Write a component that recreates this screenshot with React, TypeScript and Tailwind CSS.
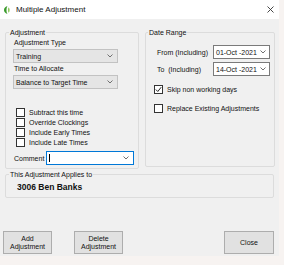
import React from 'react';

const font = { fontFamily: '"Liberation Sans", Arial, sans-serif' };

function Chevron() {
  return (
    <svg width="6" height="4" viewBox="0 0 6 4" className="shrink-0">
      <path d="M0.5 0.5 L3 3 L5.5 0.5" fill="none" stroke="#707070" strokeWidth="1" />
    </svg>
  );
}

function GraySelect({ value }: { value: string }) {
  return (
    <div className="flex items-center justify-between w-[105px] h-[14px] bg-[#e5e5e5] border border-[#c2c2c2] pl-[2px] pr-[4px] text-[7px] leading-none text-[#111] whitespace-nowrap">
      <span>{value}</span>
      <Chevron />
    </div>
  );
}

function DateSelect({ value }: { value: string }) {
  return (
    <div className="flex items-center justify-between w-[57px] h-[14px] bg-white border border-[#7a7a7a] pl-[2px] pr-[3px] text-[7px] leading-none text-[#111] whitespace-nowrap">
      <span>{value}</span>
      <Chevron />
    </div>
  );
}

function Check({ label, checked }: { label: string; checked?: boolean }) {
  return (
    <div className="flex items-center h-[9px] gap-[4px] whitespace-nowrap">
      <div className="w-[9px] h-[9px] border border-[#333] bg-white flex items-center justify-center shrink-0">
        {checked && (
          <svg width="7" height="7" viewBox="0 0 7 7">
            <path d="M0.8 3.5 L2.8 5.5 L6.2 1.2" fill="none" stroke="#222" strokeWidth="1" />
          </svg>
        )}
      </div>
      <span className="text-[7px] leading-none text-[#111]">{label}</span>
    </div>
  );
}

function Btn({ children, wide }: { children: React.ReactNode; wide?: boolean }) {
  return (
    <button
      className={
        (wide ? 'w-[50px] ' : 'w-[49px] ') +
        'h-[23px] bg-[#e1e1e1] border border-[#adadad] text-[7px] leading-[8px] text-[#111] flex flex-col items-center justify-center'
      }
    >
      {children}
    </button>
  );
}

export default function App() {
  return (
    <div className="w-[284px] h-[265px] bg-[#f7f3f1] overflow-hidden whitespace-nowrap" style={font}>
      <div className="w-[279px] h-[256px] bg-[#f0f0f0] flex flex-col">
        {/* title bar */}
        <div className="h-[19px] shrink-0 bg-white flex items-center pl-[4px] pr-[5px]">
          <svg width="6" height="8" viewBox="0 0 6 8">
            <path d="M3.5 0 C1 0.6 0 2.5 0 4 C0 5.5 1 7.4 3.5 8 C2.2 6.5 2.2 1.5 3.5 0 Z" fill="#3a9a2c" />
            <path d="M4.5 1.2 C6 2.3 6 5.7 4.5 6.8 C3.9 5.5 3.9 2.5 4.5 1.2 Z" fill="#86c450" />
          </svg>
          <span className="ml-[6px] text-[8px] leading-none text-[#111]">Multiple Adjustment</span>
          <svg width="7" height="7" viewBox="0 0 7 7" className="ml-auto">
            <path d="M0.5 0.5 L6.5 6.5 M6.5 0.5 L0.5 6.5" stroke="#333" strokeWidth="0.9" />
          </svg>
        </div>

        <div className="flex items-start gap-[6px] pl-[5px] pt-[9px]">
          {/* Adjustment group */}
          <fieldset className="w-[134px] h-[141px] border border-[#dcdcdc] rounded-[2px] pl-[3px]">
            <legend className="px-[1px] text-[7px] leading-[9px] text-[#111]">Adjustment</legend>
            <div className="pl-[4px]">
              <div className="text-[7px] leading-[9px] text-[#111] pl-[1px] mt-[1px]">Adjustment Type</div>
              <div className="mt-[2px]"><GraySelect value="Training" /></div>
              <div className="text-[7px] leading-[9px] text-[#111] pl-[1px] mt-[1px]">Time to Allocate</div>
              <div className="mt-[2px]"><GraySelect value="Balance to Target Time" /></div>
              <div className="flex flex-col gap-[1px] mt-[19px] pl-[3px]">
                <Check label="Subtract this time" />
                <Check label="Override Clockings" />
                <Check label="Include Early Times" />
                <Check label="Include Late Times" />
              </div>
              <div className="flex items-center mt-[4px]">
                <span className="text-[7px] leading-none text-[#111] pl-[1px] w-[33px]">Comment</span>
                <div className="flex items-center justify-between w-[88px] h-[14px] bg-white border border-[#0078d7] pl-[2px] pr-[4px]">
                  <div className="w-[1px] h-[8px] bg-black" />
                  <Chevron />
                </div>
              </div>
            </div>
          </fieldset>

          {/* Date Range group */}
          <fieldset className="w-[130px] h-[139px] border border-[#dcdcdc] rounded-[2px] pl-[2px]">
            <legend className="px-[1px] text-[7px] leading-[9px] text-[#111]">Date Range</legend>
            <div className="flex flex-col gap-[3px] mt-[8px] pl-[9px] pr-[4px]">
              <div className="flex items-center justify-between">
                <span className="text-[7px] leading-none text-[#111]">From (Including)</span>
                <DateSelect value="01-Oct -2021" />
              </div>
              <div className="flex items-center justify-between">
                <span className="text-[7px] leading-none text-[#111]">To&nbsp; (Including)</span>
                <DateSelect value="14-Oct -2021" />
              </div>
            </div>
            <div className="flex flex-col gap-[10px] mt-[9px] pl-[6px]">
              <Check label="Skip non working days" checked />
              <Check label="Replace Existing Adjustments" />
            </div>
          </fieldset>
        </div>

        {/* Applies to */}
        <fieldset className="ml-[5px] mt-[1px] w-[269px] h-[28px] border border-[#dcdcdc] rounded-[2px] pl-[3px]">
          <legend className="px-[1px] text-[7px] leading-[9px] text-[#111]">This Adjustment Applies to</legend>
          <div className="pl-[8px] text-[8.5px] leading-[10px] font-bold text-[#111] mt-[3px]">3006 Ben Banks</div>
        </fieldset>

        <div className="flex items-end mt-auto mb-[2px] pl-[3px] pr-[5px]">
          <Btn>
            <span>Add</span>
            <span>Adjustment</span>
          </Btn>
          <div className="ml-[22px]">
            <Btn>
              <span>Delete</span>
              <span>Adjustment</span>
            </Btn>
          </div>
          <div className="ml-auto">
            <Btn wide>Close</Btn>
          </div>
        </div>
      </div>
    </div>
  );
}
